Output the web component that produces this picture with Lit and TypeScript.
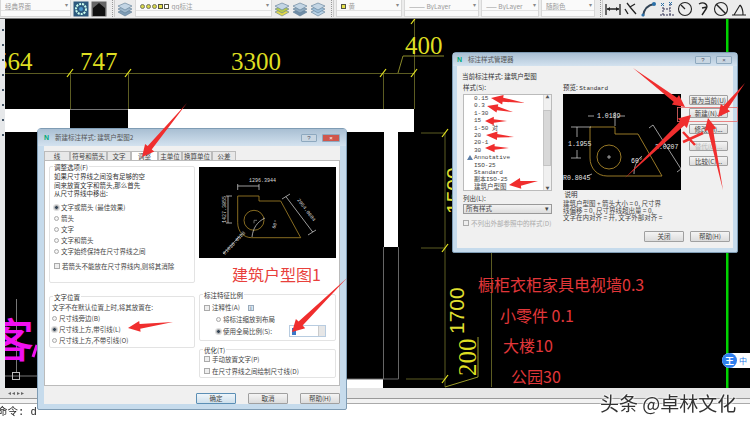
import { LitElement, html, css, svg } from "lit";
import { customElement } from "lit/decorators.js";

type A = [number, number, number, number, number?];
const arrows: A[] = [
  [187, 103, 142, 157, 10],
  [173, 322, 128, 328, 9],
  [347, 278, 292, 332, 11],
  [525, 103, 491, 98, 8],
  [513, 112, 487, 106, 7],
  [507, 121, 485, 121, 7],
  [514, 137, 486, 135, 7],
  [509, 148, 485, 148, 7],
  [538, 181, 509, 185, 9],
  [633, 68, 685, 107, 10],
  [625, 178, 691, 115, 11],
  [723, 190, 708, 118, 10],
  [745, 83, 718, 117, 10],
];

function arrowPts([x1, y1, x2, y2, w = 7]: A) {
  const dx = x2 - x1, dy = y2 - y1, L = Math.hypot(dx, dy);
  const ux = dx / L, uy = dy / L, nx = -uy, ny = ux;
  const h = Math.min(L * 0.4, 12);
  const bx = x2 - ux * h, by = y2 - uy * h;
  const s = w * 0.26, W = w * 0.6;
  const p = [
    [x1, y1],
    [bx + nx * s, by + ny * s],
    [bx + nx * W, by + ny * W],
    [x2, y2],
    [bx - nx * W, by - ny * W],
    [bx - nx * s, by - ny * s],
  ];
  return p.map((q) => q[0].toFixed(1) + "," + q[1].toFixed(1)).join(" ");
}

const layers = (a: string, b: string) => svg`<svg class="ic" viewBox="0 0 16 16">
  <path d="M1 11l7-3 7 3-7 4z" fill="${b}" stroke="#5c7a94" stroke-width=".6"/>
  <path d="M1 8l7-3 7 3-7 4z" fill="${a}" stroke="#5c7a94" stroke-width=".6"/>
  <path d="M1 5l7-3 7 3-7 4z" fill="#c3d5e4" stroke="#5c7a94" stroke-width=".6"/></svg>`;

const dimIcons = [
  svg`<path d="M1 3v11M15 3v11M2 8h12" stroke="#222" stroke-width="1.3" fill="none"/><path d="M2 8l3-2v4zM14 8l-3-2v4z" fill="#222"/>`,
  svg`<path d="M4 2l3 4 5-3M7 6l6 7M2 8l3 5" stroke="#222" stroke-width="1.3" fill="none"/>`,
  svg`<path d="M2 15C3 8 7 4 13 3" stroke="#345" stroke-width="2" fill="none"/><circle cx="13" cy="3" r="2" fill="#2a6fa8"/><circle cx="2" cy="14" r="1.6" fill="#2a6fa8"/>`,
  svg`<path d="M1 14h14M4 14V5M11 14V3M4 8h7" stroke="#335" stroke-width="1" fill="none" stroke-dasharray="2 1"/><path d="M2 2l3 3M5 2L2 5M10 1l3 3M13 1l-3 3" stroke="#2a6fa8"/>`,
  svg`<circle cx="8" cy="8" r="6.5" stroke="#222" fill="none" stroke-width="1.1"/><path d="M4 4l4 4" stroke="#222" stroke-width="1.2"/>`,
  svg`<path d="M4 3c5-3 10 1 7 5l-4 6M7 7l5-1" stroke="#222" stroke-width="1.4" fill="none"/>`,
  svg`<circle cx="8" cy="8" r="6.5" stroke="#222" fill="none" stroke-width="1.1"/><path d="M3 3l10 10" stroke="#222" stroke-width="1.4"/>`,
  svg`<path d="M1 14h14M3 14l6-10M9 4c2 2 3 6 3 10" stroke="#222" stroke-width="1.1" fill="none"/>`,
];

const dimIcon = (i: number) => svg`<svg class="ic" viewBox="0 0 16 16">${dimIcons[i]}</svg>`;

const combo = (w: number, content: unknown) =>
  html`<div class="combo" style="width:${w}px"><span class="ctext">${content}</span><span class="drop">▾</span></div>`;

const listItems = ["0.15", "0.3", "1-30", "15", "1-50 对", "20", "20-1", "30", "Annotative", "ISO-25", "Standard", "副本ISO-25", "建筑户型图"];

@customElement("app-root")
export class AppRoot extends LitElement {
  static styles = css`
    :host { display: block; width: 750px; height: 424px; overflow: hidden; background: #fff; }
    * { box-sizing: border-box; }
    .app { position: relative; width: 750px; height: 424px; display: flex; flex-direction: column;
      font-family: "Noto Sans CJK SC", "Liberation Sans", sans-serif; font-size: 6.5px; color: #333; filter: blur(.5px); line-height: 1; }
    .tb { height: 19px; flex: none; display: flex; align-items: center; background: #ececec; border-bottom: 1px solid #777; overflow: hidden; gap: 2px; padding-bottom: 1px; }
    .combo { height: 17px; flex: none; background: #fafafa; border: 1px solid #d8d8d8; border-top: 0; position: relative; display: flex; justify-content: space-between; padding: 2px 2px 0 4px; color: #999; }
    .combo::after { content: ""; position: absolute; left: 0; right: 0; top: 10px; border-top: 1px solid #e2e2e2; }
    .ctext { display: flex; align-items: center; gap: 1px; height: 8px; white-space: nowrap; font-size: 6.5px; overflow: hidden; }
    .drop { font-size: 6px; color: #888; }
    .ic { width: 16px; height: 16px; flex: none; }
    .sep { width: 3px; height: 17px; flex: none; margin-left: 3px; border-left: 1px dotted #999; border-right: 1px solid #ccc; }
    .sep.r { margin-right: 0; }
    .sq { width: 5px; height: 5px; background: #e6e24a; border: 1px solid #554; display: inline-block; flex: none; }
    .sq.w { background: #fff; }
    .lamp { width: 5px; height: 5px; border-radius: 50%; background: #d8d84a; border: 1px solid #776; display: inline-block; flex: none; }
    .mid { height: 369px; flex: none; display: flex; }
    .strip { width: 5px; flex: none; background: #e6e8ea; display: flex; flex-direction: column; align-items: center; gap: 13px; padding-top: 10px; }
    .strip i { width: 2px; height: 2px; background: #456; display: block; }
    .cad { width: 745px; height: 369px; display: block; background: #000; flex: none; }
    .status { height: 11px; flex: none; background: #e6e6e6; border-bottom: 1px solid #999; display: flex; align-items: center; gap: 2px; padding-left: 8px; color: #666; font-size: 6px; }
    .status2 { height: 5px; flex: none; background: #f2f2f2; border-bottom: 1px solid #aaa; }
    .cmd { flex: 1; font: 10.5px/1 "Liberation Mono", "Noto Sans CJK SC", monospace; color: #222; padding-top: 3px; margin-left: -3px; background: #fff; }

    .win { position: absolute; display: flex; flex-direction: column; background: #c6dbec; border: 1px solid #7f9cb4; border-radius: 4px 4px 2px 2px; }
    .d1 { left: 37px; top: 128px; width: 310px; height: 282px; padding: 0 6px 5px; }
    .d2 { left: 452px; top: 52px; width: 286px; height: 201px; padding: 0 4px 4px; }
    .title { flex: none; display: flex; align-items: center; gap: 3px; background: linear-gradient(#a9bfd3, #d3e2ef); margin: 0 -6px; padding: 0 6px; color: #555; }
    .d1 .title { height: 17px; }
    .d2 .title { height: 13px; margin: 0 -4px; padding: 0 5px 0 4px; }
    .logo { width: 8px; height: 8px; flex: none; color: #0a7; font: bold 7px "Liberation Sans", sans-serif; }
    .tsp { flex: 1; }
    .wbtn { width: 16px; height: 8px; border: 1px solid #8ea9bf; border-radius: 1px; background: #d5e2ed; color: #556; display: flex; align-items: center; justify-content: center; font: 6px "Liberation Sans", sans-serif; margin-left: 2px; }
    .wbtn.x { background: #c8d6e2; }
    .wbtn.red { background: #d0564c; color: #fff; width: 18px; }
    .body { flex: 1; background: #f0f0f0; display: flex; flex-direction: column; min-height: 0; }

    .tabs { display: flex; height: 9px; margin-top: 5px; flex: none; }
    .tab { background: #e8e8e8; border: 1px solid #bbb; border-bottom: 0; display: flex; align-items: center; justify-content: center; white-space: nowrap; color: #444; }
    .tab.on { background: #fff; }
    .page { height: 226px; flex: none; background: #fff; border: 1px solid #bbb; display: grid; grid-template-columns: 146px 137px; column-gap: 4px; padding: 5px 0 0 4px; }
    .col { display: flex; flex-direction: column; }
    .grp { position: relative; border: 1px solid #e3e3e3; border-radius: 2px; flex: none; }
    .leg { position: absolute; left: 3px; top: -4px; background: #fff; padding: 0 1px; line-height: 8px; }
    .g1 { height: 117px; padding: 5px 0 0 4px; }
    .g2 { height: 52px; margin-top: 13px; padding: 5px 0 0 2px; }
    .g3 { height: 47px; padding: 7px 0 0 4px; }
    .g4 { height: 29px; margin-top: 8px; padding: 3px 0 0 4px; }
    .para { line-height: 8.7px; margin-bottom: 4px; white-space: nowrap; }
    .row { display: flex; align-items: center; gap: 2px; height: 11px; white-space: nowrap; color: #444; }
    .row.tall { height: 12px; }
    .row.ind { padding-left: 12px; }
    .mt4 { margin-top: 3.5px; }
    .radio { width: 5px; height: 5px; border-radius: 50%; border: 1px solid #aaa; background: #f4f4f4; flex: none; }
    .radio.on { background: #345; box-shadow: 0 0 0 1px #ddd; border-color: #bbb; }
    .check { width: 6px; height: 6px; border: 1px solid #aaa; background: #eee; flex: none; }
    .info { width: 6px; height: 6px; margin-left: 6px; border: 1px solid #9ab; background: #dde6ee; color: #357; font: 5px/4px "Liberation Sans", sans-serif; text-align: center; }
    .prev { display: block; background: #000; flex: none; }
    .p1 { width: 137px; height: 91px; margin-top: 1px; }
    .cap { height: 36px; flex: none; padding: 6px 0 0 33px; color: #e8403c; font-size: 16px; line-height: 20px; white-space: nowrap; }
    .inp { width: 37px; height: 12px; margin-left: auto; margin-right: 9px; border: 1px solid #b8cce0; background: #fff; position: relative; padding: 2px; }
    .inp b { display: block; width: 4px; height: 7px; background: #3a78c8; }
    .inp u { position: absolute; right: 0; top: 0; bottom: 0; width: 7px; background: #e6e6e6; border-left: 1px solid #ccc; }
    .foot { height: 19px; flex: none; display: flex; justify-content: flex-end; gap: 12px; padding-top: 7px; }
    .btn { height: 11px; width: 40px; flex: none; border: 1px solid #a0a0a0; border-radius: 1px; background: linear-gradient(#f4f4f4, #dcdcdc); display: flex; align-items: center; justify-content: center; color: #444; white-space: nowrap; }
    .btn.def { border-color: #5b8fb5; background: linear-gradient(#eef5fa, #cfe0ec); }
    .btn.dis { color: #bbb; }

    .cur { margin: 6px 0 0 5px; height: 9px; font-size: 6.5px; line-height: 9px; flex: none; white-space: nowrap; }
    .main { display: flex; padding: 2px 0 0 6px; flex: none; }
    .c1 { width: 89px; flex: none; display: flex; flex-direction: column; }
    .c2 { width: 118px; margin-left: 11px; flex: none; display: flex; flex-direction: column; }
    .c3 { width: 39px; margin-left: 8px; padding-top: 12px; flex: none; display: flex; flex-direction: column; }
    .lab { height: 9px; line-height: 9px; flex: none; white-space: nowrap; }
    .mono { font-family: "Liberation Mono", "Noto Sans CJK SC", monospace; font-size: 6px; }
    .list { height: 97px; margin-top: 2px; flex: none; background: #fff; border: 1px solid #bbb; position: relative; padding: 0 0 0 10px; }
    .li { height: 7.4px; line-height: 7.4px; white-space: nowrap; color: #444; font-family: "Liberation Mono", "Noto Sans CJK SC", monospace; font-size: 6px; }
    .li.sel { font-size: 6.5px; }
    .tri { position: absolute; left: 3px; top: 60px; width: 0; height: 0; border: 3px solid transparent; border-bottom: 5px solid #5d7fa8; border-top: 0; }
    .sb { position: absolute; right: 0; top: 0; bottom: 0; width: 8px; background: #f0f0f0; border-left: 1px solid #ddd; display: flex; flex-direction: column; justify-content: space-between; align-items: center; font-size: 4px; color: #555; }
    .th { position: absolute; right: 0; top: 15px; height: 56px; width: 8px; background: #d8d8d8; border: 1px solid #c4c4c4; }
    .sel-box { height: 10px; margin-top: .5px; flex: none; border: 1px solid #999; background: linear-gradient(#f2f2f2, #ddd); display: flex; justify-content: space-between; align-items: center; padding: 0 2px; color: #444; }
    .dimrow { display: flex; align-items: center; gap: 2px; height: 9px; margin-top: 5px; color: #aaa; white-space: nowrap; flex: none; }
    .p2 { width: 118px; height: 96px; margin-top: 2px; }
    .desc { line-height: 7px; margin-top: 1px; white-space: nowrap; color: #444; }
    .c3 .btn { width: 39px; height: 10px; }
    .m3 { margin-top: 3px; } .m6 { margin-top: 6px; } .m7 { margin-top: 7px; } .m5 { margin-top: 5px; }
    .sp { flex: 1; }
    .foot2 { display: flex; justify-content: flex-end; gap: 6px; padding: 0 3px 6px 0; flex: none; }

    .over { position: absolute; left: 0; top: 0; width: 750px; height: 424px; pointer-events: none; }
    .red-txt { position: absolute; color: #e2373a; font-size: 16px; line-height: 20px; white-space: nowrap; }
    .r1 { left: 478px; top: 274px; }
    .r2 { left: 500px; top: 305px; }
    .r3 { left: 503px; top: 335px; }
    .r4 { left: 511px; top: 366px; }
    .ime { position: absolute; left: 722px; top: 353px; width: 28px; height: 15px; background: #fff; border-radius: 8px 0 0 8px; display: flex; align-items: center; color: #2a7ae8; font-size: 8px; gap: 2px; }
    .ime b { width: 15px; height: 15px; border-radius: 50%; background: #2f7fee; color: #fff; font-size: 9px; font-weight: 700; display: flex; align-items: center; justify-content: center; }
    .wm { position: absolute; left: 600px; top: 391px; font-size: 19px; line-height: 24px; color: #333; white-space: nowrap; text-shadow: 0 0 2px #fff, 0 0 2px #fff, 0 0 3px #fff; }
  `;

  private toolbar() {
    return html`<div class="tb">
      ${combo(71, "经典界面")}
      <svg class="ic" viewBox="0 0 16 16"><rect x=".5" y=".5" width="15" height="15" fill="#2d5a7e"/><circle cx="8" cy="8" r="5" fill="none" stroke="#cfe" stroke-width="2" stroke-dasharray="2 1"/><circle cx="8" cy="8" r="2" fill="#4a9ad0"/></svg>
      <svg class="ic" viewBox="0 0 16 16"><rect x=".5" y=".5" width="15" height="15" fill="#666"/><path d="M2 15V7l6-5 6 5v8z" fill="#111"/></svg>
      <div class="sep"></div>
      ${layers("#9fb8cc", "#7f9db6")}
      ${combo(137, html`<span class="lamp"></span><span class="lamp"></span><span class="lamp"></span><span class="sq"></span><span class="sq w"></span>&nbsp;qq标注`)}
      ${layers("#b8cb4a", "#e2d84a")}${layers("#8fa9be", "#6f8ca6")}${layers("#9fc0da", "#b9d2e6")}
      <div class="sep"></div>
      ${combo(66, html`<span class="sq"></span>&nbsp;黄`)}
      ${combo(75, html`——— ByLayer`)}
      ${combo(58, html`—— ByLayer`)}
      ${combo(54, "随颜色")}
      <div class="sep r"></div>
      ${dimIcons.map((_, i) => dimIcon(i))}
    </div>`;
  }

  private cad() {
    const dim = "#5c5c22", yel = "#e6e620";
    const ticks = [[70, 74], [128, 74], [383, 74], [414, 74], [414, 21], [445, 134], [445, 249], [445, 380]];
    return svg`<svg class="cad" viewBox="5 20 745 369">
      <rect x="5" y="110" width="65" height="23" fill="#fff"/>
      <rect x="128" y="110" width="286" height="23" fill="#fff"/>
      <rect x="384" y="133" width="14" height="115" fill="#fff"/>
      <rect x="345" y="380" width="38" height="9" fill="#fff"/>
      <path d="M398.5 248v132H345M383.5 248v132" stroke="#666" fill="none"/>
      <path d="M5 74.5h409M70.5 74v36M128.5 74v36M383.5 74v36M414.5 20v90" stroke="${dim}" fill="none"/>
      <path d="M70 110.5h58" stroke="#777"/>
      <path d="M398 74l5-17h41" stroke="#8a8a2a" fill="none"/>
      <path d="M445 134v254M421 134h24M421 249h24M406 380h39M491.5 253v135" stroke="${dim}" fill="none"/>
      <path d="M445 388l33-10v-40" stroke="#9a9a2a" fill="none"/>
      ${ticks.map(([x, y]) => svg`<path d="M${x - 3} ${y + 4}L${x + 3} ${y - 4}" stroke="${yel}" stroke-width="1.2"/>`)}
      <g fill="#dede22" font-family="Liberation Serif, serif" font-size="25">
        <text x="-5" y="71">564</text>
        <text x="80" y="71">747</text>
        <text x="231" y="71">3300</text>
        <text x="405" y="55">400</text>
        <text transform="translate(476 377) rotate(-90)">200</text>
      </g>
      <text transform="translate(464 335) rotate(-90)" fill="#e0e030" font-family="Liberation Sans, sans-serif" font-size="21">1700</text>
      <text transform="translate(461 215) rotate(-90)" fill="#e0e030" font-family="Liberation Sans, sans-serif" font-size="21">1500</text>
      <path d="M5 377h32M16.500 300v73" stroke="#777" fill="none"/>
      <rect x="12.500" y="373.500" width="7" height="7" fill="none" stroke="#bbb"/>
      <text x="-12" y="358" fill="#f010f0" font-family="Noto Sans CJK SC, sans-serif" font-weight="500" font-size="46">客</text>
      <path d="M33 358l4-12" stroke="#f010f0" stroke-width="3" fill="none"/>
      <rect x="726" y="20" width="2.500" height="369" fill="#00d400"/>
    </svg>`;
  }

  private preview1() {
    return svg`<svg class="prev p1" viewBox="199 166 137 91">
      <g fill="none" stroke="#a8862a" stroke-width=".8">
        <path d="M237.700 195H259v5h21.700l20 36.700h-49c-8 0-14-6-14-15z"/>
        <circle cx="254" cy="219.300" r="10"/>
        <path d="M254 219.300h3M254 219.300v3" stroke="#888"/>
      </g>
      <g fill="none" stroke="#ddd" stroke-width=".7">
        <path d="M237.700 183v6M259 183v6M237.700 185h21.300"/>
        <path d="M226 195h6M226 222h6M228 195v27"/>
        <path d="M286 195.700l26.700 35.300M282 198l8-5M308 234l8-5"/>
        <path d="M252 236c1-9 5-15 13-19"/>
        <path d="M223 253l18.700-20"/>
      </g>
      <g fill="#ddd" font-family="Liberation Mono, monospace" font-size="5">
        <text x="249" y="181">1296.3944</text>
        <text transform="translate(226 222) rotate(-90)">1427.3855</text>
        <text transform="translate(297 199) rotate(53)">2054.0604</text>
        <text transform="translate(225 254) rotate(-47)">R1036.0528</text>
        <text transform="translate(275 228) rotate(-70)">60°</text>
      </g>
    </svg>`;
  }

  private preview2() {
    return svg`<svg class="prev p2" viewBox="563 94 118 96">
      <g fill="none" stroke="#a8862a" stroke-width=".9">
        <path d="M590 127h25v7h23l24 42h-55c-10 0-17-8-17-18z"/>
        <circle cx="609" cy="157" r="12"/>
      </g>
      <path d="M607 157h4M609 155v4" stroke="#ddd" stroke-width=".7"/>
      <g fill="none" stroke="#ddd" stroke-width=".7">
        <path d="M588 116h6M620 116h5M615 112v14"/>
        <path d="M571 127h20M577 127v10M577 150v8M571 158h10"/>
        <path d="M587 176l5-2"/>
        <path d="M649 128l4-3 28 44-4 3"/>
        <path d="M634 174c0-8 3-14 8-18"/>
      </g>
      <g fill="#e8e8e8" font-family="Liberation Mono, monospace" font-size="6.500">
        <text x="597" y="118">1.0189</text>
        <text x="568" y="145.500">1.1955</text>
        <text x="563" y="180">R0.8045</text>
        <text x="631" y="163">60°</text>
        <text x="655" y="149">2.0207</text>
      </g>
    </svg>`;
  }

  private dialog1() {
    const tabs: [string, number, boolean?][] = [["线", 26], ["符号和箭头", 37], ["文字", 24], ["调整", 27, true], ["主单位", 24], ["换算单位", 30], ["公差", 24]];
    return html`<div class="win d1">
      <div class="title"><span class="logo">N</span>新建标注样式: 建筑户型图2<span class="tsp"></span><span class="wbtn x">?</span><span class="wbtn red">×</span></div>
      <div class="body">
        <div class="tabs">${tabs.map(([t, w, on]) => html`<div class="tab ${on ? "on" : ""}" style="width:${w}px">${t}</div>`)}</div>
        <div class="page">
          <div class="col">
            <div class="grp g1"><span class="leg">调整选项(F)</span>
              <div class="para">如果尺寸界线之间没有足够的空<br />间来放置文字和箭头,那么首先<br />从尺寸界线中移出:</div>
              <div class="row"><span class="radio on"></span>文字或箭头 (最佳效果)</div>
              <div class="row"><span class="radio"></span>箭头</div>
              <div class="row"><span class="radio"></span>文字</div>
              <div class="row"><span class="radio"></span>文字和箭头</div>
              <div class="row"><span class="radio"></span>文字始终保持在尺寸界线之间</div>
              <div class="row mt4"><span class="check"></span>若箭头不能放在尺寸界线内,则将其消除</div>
            </div>
            <div class="grp g2"><span class="leg">文字位置</span>
              <div class="row">文字不在默认位置上时,将其放置在:</div>
              <div class="row"><span class="radio"></span>尺寸线旁边(B)</div>
              <div class="row"><span class="radio on"></span>尺寸线上方,带引线(L)</div>
              <div class="row"><span class="radio"></span>尺寸线上方,不带引线(O)</div>
            </div>
          </div>
          <div class="col">
            ${this.preview1()}
            <div class="cap">建筑户型图1</div>
            <div class="grp g3"><span class="leg">标注特征比例</span>
              <div class="row"><span class="check"></span>注释性(A)<span class="info">i</span></div>
              <div class="row tall ind"><span class="radio"></span>将标注缩放到布局</div>
              <div class="row tall ind"><span class="radio on"></span>使用全局比例(S):<span class="inp"><b></b><u></u></span></div>
            </div>
            <div class="grp g4"><span class="leg">优化(T)</span>
              <div class="row tall"><span class="check"></span>手动放置文字(P)</div>
              <div class="row tall"><span class="check"></span>在尺寸界线之间绘制尺寸线(D)</div>
            </div>
          </div>
        </div>
        <div class="foot">
          <div class="btn def">确定</div><div class="btn">取消</div><div class="btn">帮助(H)</div>
        </div>
      </div>
    </div>`;
  }

  private dialog2() {
    return html`<div class="win d2">
      <div class="title"><span class="logo">N</span>标注样式管理器<span class="tsp"></span><span class="wbtn x">?</span><span class="wbtn x">×</span></div>
      <div class="body">
        <div class="cur">当前标注样式: 建筑户型图</div>
        <div class="main">
          <div class="c1">
            <div class="lab">样式(S):</div>
            <div class="list">
              ${listItems.map((t, i) => html`<div class="li ${i === 12 ? "sel" : ""}">${t}</div>`)}
              <span class="tri"></span>
              <div class="sb"><span>▲</span><span>▼</span></div><div class="th"></div>
            </div>
            <div class="lab m3">列出(L):</div>
            <div class="sel-box">所有样式<span>▾</span></div>
            <div class="dimrow"><span class="check"></span>不列出外部参照中的样式(D)</div>
          </div>
          <div class="c2">
            <div class="lab">预览: <span class="mono">Standard</span></div>
            ${this.preview2()}
            <div class="lab">&nbsp;说明</div>
            <div class="desc">建筑户型图 + 箭头大小 = 0, 尺寸界<br />线偏移 = 0, 尺寸界线超出量 = 0,<br />文字在内对齐 = 开, 文字外部对齐 =</div>
          </div>
          <div class="c3">
            <div class="btn">置为当前(U)</div>
            <div class="btn m3">新建(N)...</div>
            <div class="btn m6">修改(M)...</div>
            <div class="btn m7 dis">替代(O)...</div>
            <div class="btn m5">比较(C)...</div>
          </div>
        </div>
        <div class="sp"></div>
        <div class="foot2"><div class="btn">关闭</div><div class="btn">帮助(H)</div></div>
      </div>
    </div>`;
  }

  render() {
    return html`<div class="app">
      ${this.toolbar()}
      <div class="mid">
        <div class="strip">${[0, 1, 2, 3, 4, 5, 6, 7].map(() => html`<i></i>`)}</div>
        ${this.cad()}
      </div>
      <div class="status">◂ ◂ ▸ ▸</div>
      <div class="status2"></div>
      <div class="cmd">命令: d</div>
      ${this.dialog1()}
      ${this.dialog2()}
      <div class="red-txt r1">橱柜衣柜家具电视墙0.3</div>
      <div class="red-txt r2">小零件 0.1</div>
      <div class="red-txt r3">大楼10</div>
      <div class="red-txt r4">公园30</div>
      <div class="ime"><b>王</b>中</div>
      <div class="wm">头条 @卓林文化</div>
      <svg class="over" viewBox="0 0 750 424">
        <rect x="677.500" y="107.500" width="60" height="14" fill="none" stroke="#e86a6a" stroke-width=".8"/>
        ${arrows.map((a) => svg`<polygon points="${arrowPts(a)}" fill="#f02e2e"/>`)}
        <path d="M683 142l20-9M683 132l12 13" stroke="#f02e2e" stroke-width="2.500" fill="none"/>
      </svg>
    </div>`;
  }
}
